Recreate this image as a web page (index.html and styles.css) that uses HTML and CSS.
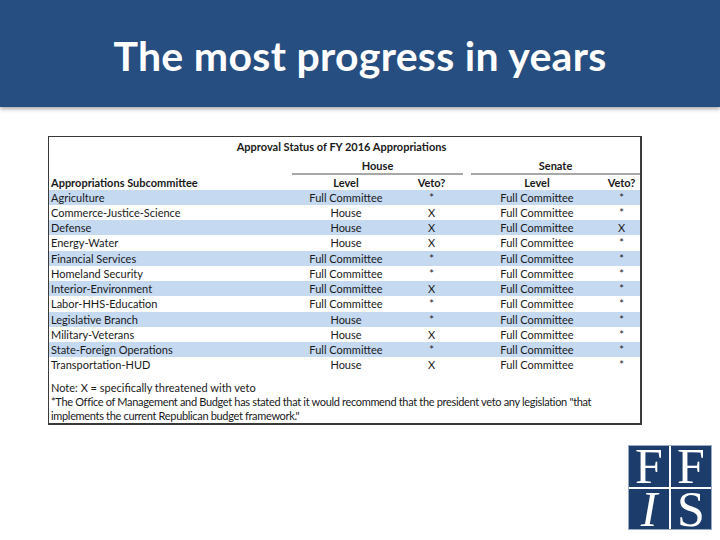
FILE: index.html
```html
<!DOCTYPE html>
<html lang="en">
<head>
<meta charset="utf-8">
<title>The most progress in years</title>
<link rel="stylesheet" href="styles.css">
</head>
<body>
<header class="banner">
  <h1 class="banner-title">The most progress in years</h1>
</header>
<main class="content">
  <section class="sheet">
    <div class="sheet-title">Approval Status of FY 2016 Appropriations</div>
    <div class="row row-chamber">
      <div class="cell"></div>
      <div class="cell chamber chamber-house">House</div>
      <div class="cell"></div>
      <div class="cell chamber chamber-senate">Senate</div>
    </div>
    <div class="row row-head">
      <div class="cell name">Appropriations Subcommittee</div>
      <div class="cell">Level</div>
      <div class="cell">Veto?</div>
      <div class="cell"></div>
      <div class="cell">Level</div>
      <div class="cell">Veto?</div>
    </div>
    <div class="row shade"><div class="cell name">Agriculture</div><div class="cell">Full Committee</div><div class="cell">*</div><div class="cell"></div><div class="cell">Full Committee</div><div class="cell">*</div></div>
    <div class="row"><div class="cell name">Commerce-Justice-Science</div><div class="cell">House</div><div class="cell">X</div><div class="cell"></div><div class="cell">Full Committee</div><div class="cell">*</div></div>
    <div class="row shade"><div class="cell name">Defense</div><div class="cell">House</div><div class="cell">X</div><div class="cell"></div><div class="cell">Full Committee</div><div class="cell">X</div></div>
    <div class="row"><div class="cell name">Energy-Water</div><div class="cell">House</div><div class="cell">X</div><div class="cell"></div><div class="cell">Full Committee</div><div class="cell">*</div></div>
    <div class="row shade"><div class="cell name">Financial Services</div><div class="cell">Full Committee</div><div class="cell">*</div><div class="cell"></div><div class="cell">Full Committee</div><div class="cell">*</div></div>
    <div class="row"><div class="cell name">Homeland Security</div><div class="cell">Full Committee</div><div class="cell">*</div><div class="cell"></div><div class="cell">Full Committee</div><div class="cell">*</div></div>
    <div class="row shade"><div class="cell name">Interior-Environment</div><div class="cell">Full Committee</div><div class="cell">X</div><div class="cell"></div><div class="cell">Full Committee</div><div class="cell">*</div></div>
    <div class="row"><div class="cell name">Labor-HHS-Education</div><div class="cell">Full Committee</div><div class="cell">*</div><div class="cell"></div><div class="cell">Full Committee</div><div class="cell">*</div></div>
    <div class="row shade"><div class="cell name">Legislative Branch</div><div class="cell">House</div><div class="cell">*</div><div class="cell"></div><div class="cell">Full Committee</div><div class="cell">*</div></div>
    <div class="row"><div class="cell name">Military-Veterans</div><div class="cell">House</div><div class="cell">X</div><div class="cell"></div><div class="cell">Full Committee</div><div class="cell">*</div></div>
    <div class="row shade"><div class="cell name">State-Foreign Operations</div><div class="cell">Full Committee</div><div class="cell">*</div><div class="cell"></div><div class="cell">Full Committee</div><div class="cell">*</div></div>
    <div class="row"><div class="cell name">Transportation-HUD</div><div class="cell">House</div><div class="cell">X</div><div class="cell"></div><div class="cell">Full Committee</div><div class="cell">*</div></div>
    <div class="notes">
      <p class="note">Note: X = specifically threatened with veto</p>
      <p class="note note-omb">*The Office of Management and Budget has stated that it would recommend that the president veto any legislation "that<br>implements the current Republican budget framework."</p>
    </div>
  </section>
  <div class="brand">
    <div class="logo" aria-label="FFIS">
      <span class="logo-cell">F</span>
      <span class="logo-cell">F</span>
      <span class="logo-cell logo-italic">I</span>
      <span class="logo-cell">S</span>
    </div>
  </div>
</main>
</body>
</html>
```
FILE: styles.css
```css
* { box-sizing: border-box; }

html, body {
  margin: 0;
  padding: 0;
}

body {
  width: 720px;
  height: 540px;
  overflow: hidden;
  background: #ffffff;
  font-family: Lato, "Open Sans", sans-serif;
  color: #1a1a1a;
}

.banner {
  height: 107px;
  background: #264e80;
  box-shadow: 0 2px 4px rgba(0, 0, 0, 0.35);
  display: flex;
  align-items: center;
  justify-content: center;
}

.banner-title {
  margin: 0;
  padding-top: 4px;
  color: #ffffff;
  font-family: Lato, "Open Sans", sans-serif;
  font-weight: 700;
  font-size: 41px;
  letter-spacing: 0.3px;
}

.content {
  padding: 29px 0 0 48px;
}

.sheet {
  width: 594px;
  height: 289px;
  border: 1px solid #3a3a3a;
  border-right-width: 2px;
  border-bottom-width: 2px;
  font-size: 11px;
  line-height: 15px;
}

.sheet-title {
  height: 18px;
  padding-top: 2px;
  text-align: center;
  font-weight: 700;
  padding-right: 6px;
}

.row {
  display: grid;
  grid-template-columns: 243px 108px 63px 8px 132px 37px;
  height: 15.25px;
  align-items: center;
}

.row-chamber {
  grid-template-columns: 243px 171px 8px 169px;
  height: 20px;
  align-items: end;
}

.row-head {
  height: 14.5px;
  font-weight: 700;
}

.cell {
  text-align: center;
  white-space: nowrap;
}

.name {
  text-align: left;
  padding-left: 2px;
}

.chamber {
  font-weight: 700;
  border-bottom: 2px solid #a8a8a8;
  padding-bottom: 0;
}

.shade {
  background: #c5d9f1;
}

.notes {
  padding: 8px 0 0 2px;
}

.note {
  margin: 0;
  line-height: 14px;
  white-space: nowrap;
}

.note-omb {
  letter-spacing: -0.33px;
}

.brand {
  display: flex;
  justify-content: flex-end;
  padding: 20px 8px 0 0;
}

.logo {
  width: 84px;
  height: 85px;
  border: 1px solid #9aaac2;
  background: #ffffff;
  display: grid;
  grid-template-columns: 40px 40px;
  grid-template-rows: 40.5px 40.5px;
  gap: 2px;
}

.logo-cell {
  background: #1c3d6b;
  color: #ffffff;
  font-family: "Liberation Serif", "DejaVu Serif", serif;
  font-size: 50px;
  line-height: 36px;
  text-align: center;
  display: flex;
  align-items: flex-start;
  justify-content: center;
  padding-top: 2px;
}

.logo-italic {
  font-style: italic;
}
```
